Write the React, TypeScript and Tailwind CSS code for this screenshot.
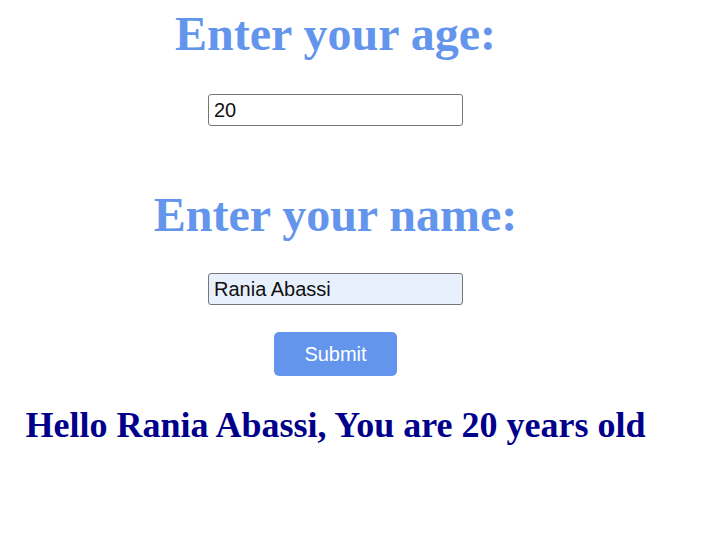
import { useState } from "react"

const serif = "font-['Liberation_Serif','Times_New_Roman',serif] font-bold"
const sans = "font-['Liberation_Sans',Arial,sans-serif]"

const App = () => {
  const [age, setAge] = useState("20")
  const [name, setName] = useState("Rania Abassi")
  const [shown, setShown] = useState({ name: "Rania Abassi", age: "20" })

  return (
    <div className="w-[671px] bg-white text-center">
      <h1 className={`${serif} mt-[7px] text-[48px] leading-[53px] text-[#6495ed]`}>Enter your age:</h1>
      <div className="mt-[34px] flex justify-center">
        <input
          value={age}
          onChange={(e) => setAge(e.target.value)}
          className={`${sans} h-[32px] w-[255px] rounded-[3px] border border-[#767676] px-[5px] text-[20px] text-[#111] outline-none`}
        />
      </div>

      <h1 className={`${serif} mt-[62px] text-[48px] leading-[53px] text-[#6495ed]`}>Enter your name:</h1>
      <div className="mt-[32px] flex justify-center">
        <input
          value={name}
          onChange={(e) => setName(e.target.value)}
          className={`${sans} h-[32px] w-[255px] rounded-[3px] border border-[#767676] bg-[#e8f0fe] px-[5px] text-[20px] text-[#111] outline-none`}
        />
      </div>

      <div className="mt-[27px] flex justify-center">
        <button
          onClick={() => setShown({ name, age })}
          className={`${sans} h-[44px] w-[123px] rounded-[5px] bg-[#6495ed] text-[20px] text-white`}
        >
          Submit
        </button>
      </div>

      <h2 className={`${serif} mt-[29px] text-[36px] leading-[40px] text-[#00008b]`}>
        Hello {shown.name}, You are {shown.age} years old
      </h2>
    </div>
  )
}

export default App
